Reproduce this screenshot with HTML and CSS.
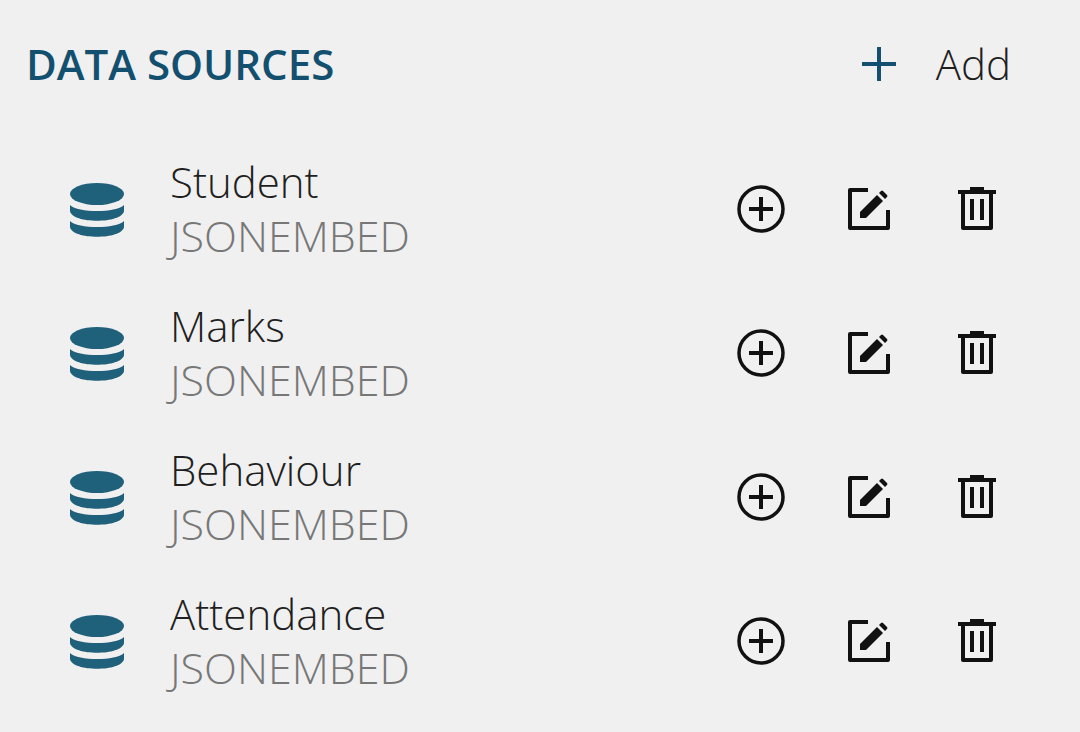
FILE: index.html
```html
<!DOCTYPE html>
<html lang="en">
<head>
  <meta charset="UTF-8">
  <meta name="viewport" content="width=device-width, initial-scale=1.0">
  <title>Data Sources</title>
  <link rel="stylesheet" href="styles.css">
</head>
<body>

  <!-- icons shared by all rows -->
  <svg class="sprite" aria-hidden="true">
    <symbol id="icon-database" viewBox="0 0 56 56">
      <ellipse cx="28" cy="13" rx="27" ry="11"/>
      <path d="M1 24 C9 32 47 32 55 24 V30 C53 43 3 43 1 30 Z"/>
      <path d="M1 40 C9 48 47 48 55 40 V46 C53 59 3 59 1 46 Z"/>
    </symbol>
    <symbol id="icon-add" viewBox="0 0 48 48">
      <circle cx="24" cy="24" r="22" fill="none" stroke="currentColor" stroke-width="3.5"/>
      <path d="M24 12 V36 M12 24 H36" fill="none" stroke="currentColor" stroke-width="4"/>
    </symbol>
    <symbol id="icon-edit" viewBox="0 0 48 48">
      <path d="M23 5 H5 V43 H43 V25" fill="none" stroke="currentColor" stroke-width="4" stroke-linejoin="round"/>
      <path d="M15 33 V27 L32 10 L38 16 L21 33 Z"/>
      <path d="M34 8 L36 6 Q37 5 38 6 L42 10 Q43 11 42 12 L40 14 Z"/>
    </symbol>
    <symbol id="icon-delete" viewBox="0 0 48 48">
      <path d="M5 7 H43 M17 4 H31" fill="none" stroke="currentColor" stroke-width="4"/>
      <path d="M10 8 V43 H38 V8" fill="none" stroke="currentColor" stroke-width="4" stroke-linejoin="round"/>
      <path d="M19 14 V35 M29 14 V35" fill="none" stroke="currentColor" stroke-width="4"/>
    </symbol>
  </svg>

  <header class="header">
    <h1>DATA SOURCES</h1>
    <button class="add-button" type="button">
      <svg viewBox="0 0 34 34" aria-hidden="true"><path d="M17 0 V34 M0 17 H34"/></svg>
      Add
    </button>
  </header>

  <ul class="sources">
    <li class="source">
      <svg class="database"><use href="#icon-database"/></svg>
      <div class="info">
        <span class="name">Student</span>
        <span class="type">JSONEMBED</span>
      </div>
      <div class="actions">
        <button type="button" aria-label="Add Student"><svg><use href="#icon-add"/></svg></button>
        <button type="button" aria-label="Edit Student"><svg><use href="#icon-edit"/></svg></button>
        <button type="button" aria-label="Delete Student"><svg><use href="#icon-delete"/></svg></button>
      </div>
    </li>
    <li class="source">
      <svg class="database"><use href="#icon-database"/></svg>
      <div class="info">
        <span class="name">Marks</span>
        <span class="type">JSONEMBED</span>
      </div>
      <div class="actions">
        <button type="button" aria-label="Add Marks"><svg><use href="#icon-add"/></svg></button>
        <button type="button" aria-label="Edit Marks"><svg><use href="#icon-edit"/></svg></button>
        <button type="button" aria-label="Delete Marks"><svg><use href="#icon-delete"/></svg></button>
      </div>
    </li>
    <li class="source">
      <svg class="database"><use href="#icon-database"/></svg>
      <div class="info">
        <span class="name">Behaviour</span>
        <span class="type">JSONEMBED</span>
      </div>
      <div class="actions">
        <button type="button" aria-label="Add Behaviour"><svg><use href="#icon-add"/></svg></button>
        <button type="button" aria-label="Edit Behaviour"><svg><use href="#icon-edit"/></svg></button>
        <button type="button" aria-label="Delete Behaviour"><svg><use href="#icon-delete"/></svg></button>
      </div>
    </li>
    <li class="source">
      <svg class="database"><use href="#icon-database"/></svg>
      <div class="info">
        <span class="name">Attendance</span>
        <span class="type">JSONEMBED</span>
      </div>
      <div class="actions">
        <button type="button" aria-label="Add Attendance"><svg><use href="#icon-add"/></svg></button>
        <button type="button" aria-label="Edit Attendance"><svg><use href="#icon-edit"/></svg></button>
        <button type="button" aria-label="Delete Attendance"><svg><use href="#icon-delete"/></svg></button>
      </div>
    </li>
  </ul>

</body>
</html>
```
FILE: styles.css
```css
body {
  margin: 0;
  background-color: #f0f0f0;
  color: #1f1f1f;
  font-family: "Segoe UI", "Open Sans", sans-serif;
  font-size: 42px;
  font-weight: 300;
  line-height: 54px;
}
.sprite {
  display: none;
}
button {
  padding: 0;
  border: none;
  background: none;
  color: inherit;
  font: inherit;
  cursor: pointer;
}
.header {
  display: flex;
  justify-content: space-between;
  align-items: center;
  padding: 37px 69px 46px 26px;
}
.header h1 {
  margin: 0;
  color: #13506f;
  font-size: 42px;
  font-weight: 600;
}
.add-button {
  display: flex;
  align-items: center;
  gap: 40px;
}
.add-button svg {
  width: 34px;
  height: 34px;
  fill: none;
  stroke: #13506f;
  stroke-width: 4;
}
.sources {
  margin: 0;
  padding: 0;
  list-style: none;
}
.source {
  display: flex;
  align-items: center;
  padding: 18px 49px 18px 69px;
}
.database {
  width: 56px;
  height: 56px;
  margin-right: 45px;
  fill: #1f607b;
}
.info {
  display: flex;
  flex: 1;
  flex-direction: column;
}
.type {
  color: #777;
  font-size: 43px;
}
.actions {
  display: flex;
}
.actions button {
  display: flex;
  justify-content: center;
  width: 108px;
  color: #111;
}
.actions svg {
  width: 48px;
  height: 48px;
  fill: currentColor;
}
```
